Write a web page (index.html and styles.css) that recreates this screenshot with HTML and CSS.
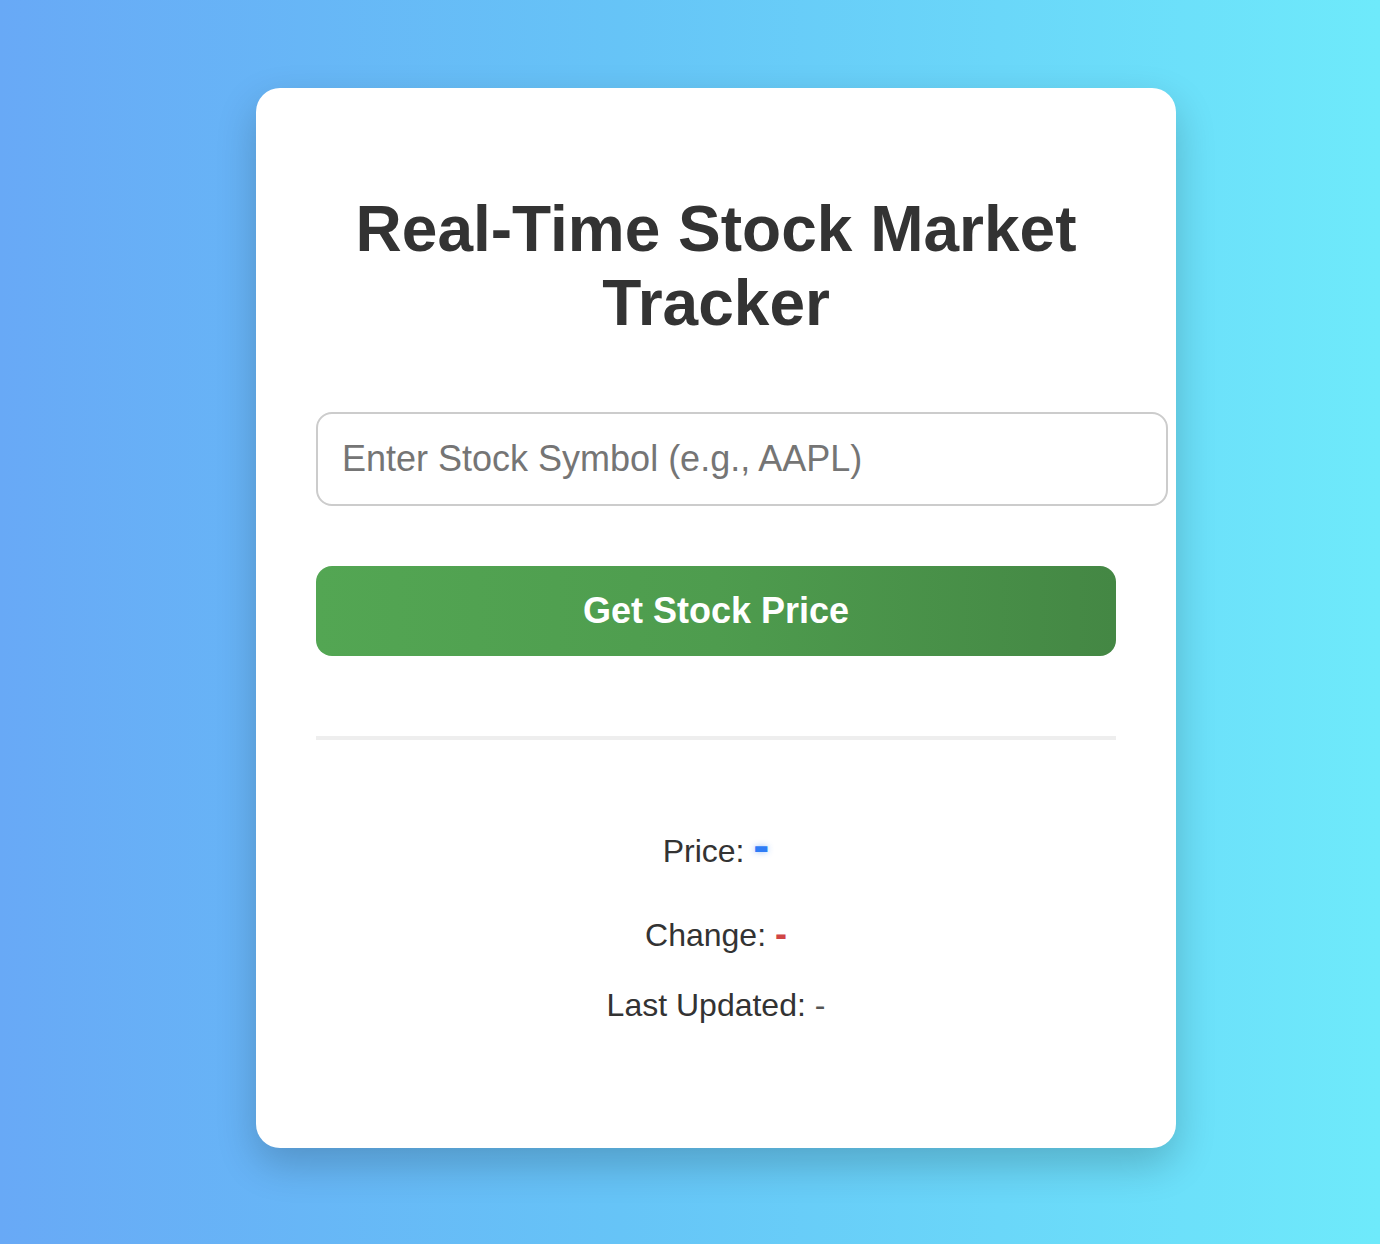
FILE: index.html
```html
<!DOCTYPE html>
<html lang="en">
<head>
<meta charset="UTF-8">
<title>Real-Time Stock Market Tracker</title>
<link rel="stylesheet" href="styles.css">
</head>
<body>
  <main class="page">
    <section class="card">
      <h1 class="title">Real-Time Stock Market Tracker</h1>
      <input class="symbol-input" type="text" placeholder="Enter Stock Symbol (e.g., AAPL)">
      <button class="fetch-btn" type="button">Get Stock Price</button>
      <div class="results">
        <p class="row row-price">Price: <span class="price-value">-</span></p>
        <p class="row row-change">Change: <span class="change-value">-</span></p>
        <p class="row">Last Updated: <span class="time-value">-</span></p>
      </div>
    </section>
  </main>
</body>
</html>
```
FILE: styles.css
```css
html, body {
  margin: 0;
  padding: 0;
}

body {
  min-height: 1244px;
  background: linear-gradient(90deg, #68a9f6 0%, #66c4f7 45%, #6eeafb 100%);
  font-family: "Liberation Sans", Arial, sans-serif;
  color: #333;
}

.page {
  display: flex;
  justify-content: center;
  padding: 88px 0 0 52px;
}

.card {
  width: 800px;
  padding: 60px;
  background: #fff;
  border-radius: 24px;
  box-shadow: 0 16px 40px rgba(0, 0, 0, 0.2);
  text-align: center;
}

.title {
  margin: 44px 0 72px;
  font-size: 64px;
  line-height: 74px;
  font-weight: bold;
  color: #333;
}

.symbol-input {
  display: block;
  box-sizing: content-box;
  width: 100%;
  height: 90px;
  padding: 0 24px;
  margin: 0;
  border: 2px solid #ccc;
  border-radius: 16px;
  font-family: "Liberation Sans", Arial, sans-serif;
  font-size: 36px;
  color: #333;
  text-align: left;
  outline: none;
}

.symbol-input::placeholder {
  color: #757575;
}

.fetch-btn {
  display: block;
  width: 100%;
  height: 90px;
  margin-top: 60px;
  border: none;
  border-radius: 16px;
  background: linear-gradient(90deg, #53a653 0%, #4e9c4e 50%, #448744 100%);
  color: #fff;
  font-family: "Liberation Sans", Arial, sans-serif;
  font-size: 36px;
  font-weight: bold;
  cursor: pointer;
}

.results {
  margin-top: 80px;
  border-top: 4px solid #eee;
  padding: 46px 0 32px;
}

.row {
  margin: 32px 0;
  font-size: 32px;
  color: #333;
}

.row-price {
  margin-bottom: 40px;
}

.price-value {
  font-size: 48px;
  font-weight: bold;
  color: #2f7cf6;
  text-shadow: 0 0 6px rgba(47, 124, 246, 0.45);
}

.change-value {
  font-size: 36px;
  font-weight: bold;
  color: #d04545;
}

.time-value {
  color: #555;
}
```
